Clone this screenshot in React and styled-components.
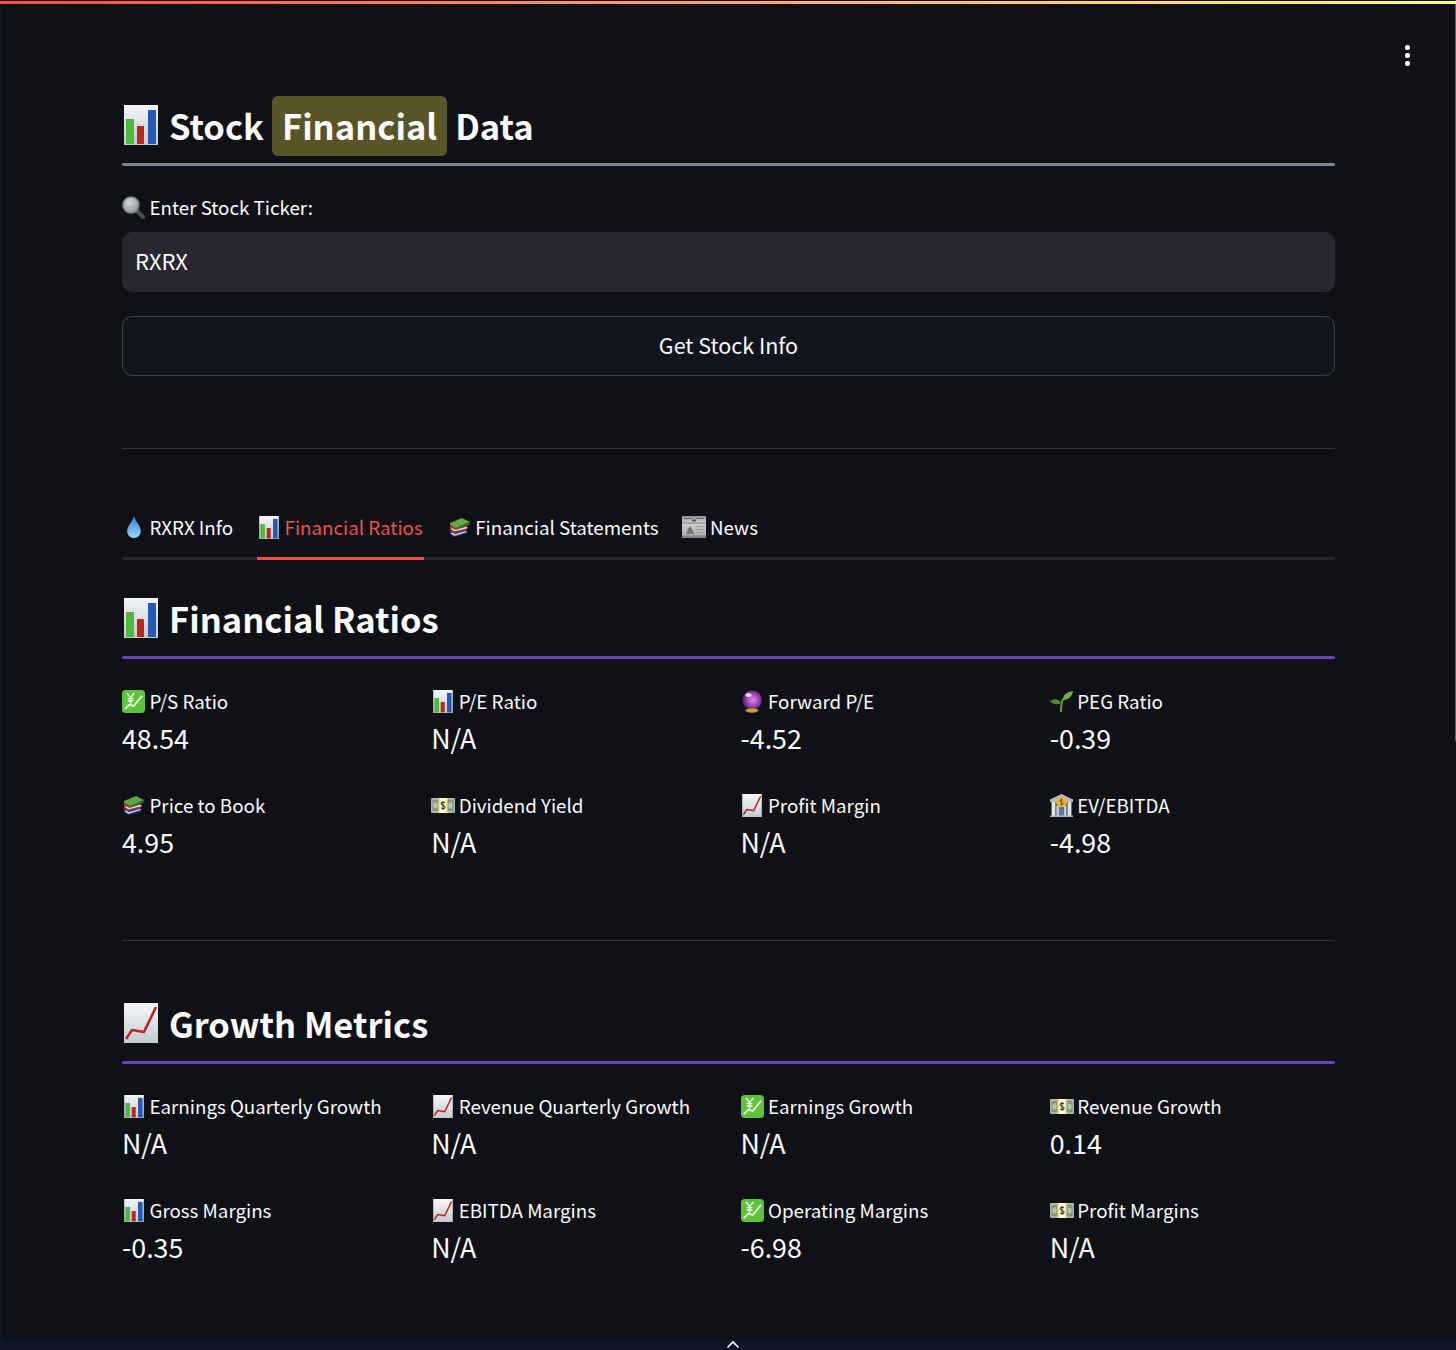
import styled, { createGlobalStyle } from "styled-components";

const Global = createGlobalStyle`
  html, body { margin: 0; padding: 0; background: #0e1629; }
  body { font-family: "Noto Sans CJK SC", "Noto Sans", sans-serif; color: #fafafa; }
`;

const Frame = styled.div`
  position: relative;
  width: 1456px;
  height: 1350px;
  overflow: hidden;
  display: flex;
  flex-direction: column;
  background: #0e1629;
`;

const TopBar = styled.div`
  height: 3px;
  margin-top: 1px;
  margin-bottom: -4px;
  position: relative;
  z-index: 1;
  background: linear-gradient(90deg, #ff4b4b, #fffd80);
`;

const Main = styled.main`
  flex: 1;
  margin-left: 1px;
  background: #0f1116;
  border-bottom-left-radius: 8px;
  padding: 96px 121px 0 121px;
`;

const Kebab = styled.div`
  position: absolute;
  top: 45px;
  left: 1405px;
  display: flex;
  flex-direction: column;
  gap: 3.5px;
  span { width: 4.5px; height: 4.5px; border-radius: 50%; background: #fafafa; }
`;

const Scrollbar = styled.div`
  position: absolute;
  top: 0;
  right: 0;
  width: 1px;
  height: 741px;
  background: #5b5d66;
`;

const BottomBar = styled.div`
  height: 10px;
  display: flex;
  justify-content: center;
  padding-left: 10px;
  svg { display: block; margin-top: 0; }
`;

const Title = styled.h1`
  margin: 0;
  height: 60px;
  box-sizing: border-box;
  padding-bottom: 2px;
  display: flex;
  align-items: center;
  font-size: 34.5px;
  font-weight: 600;
  line-height: 58px;
  letter-spacing: 0;
`;

const Highlight = styled.span`
  align-self: flex-start;
  margin: 0 8px 0 8px;
  padding: 0 10px;
  height: 60px;
  background: #5a5429;
  border-radius: 6px;
`;

const Heading = styled.h2`
  margin: ${(p) => p.$top}px 0 0;
  height: 60px;
  display: flex;
  align-items: center;
  font-size: 34.5px;
  font-weight: 600;
  line-height: 60px;
`;

const Rule = styled.div`
  height: 3px;
  border-radius: 2px;
  background: ${(p) => p.$color};
  margin-top: ${(p) => p.$top}px;
`;

const Divider = styled.hr`
  border: 0;
  height: 1px;
  background: #33353c;
  margin: ${(p) => p.$top}px 0 0;
`;

const IconText = styled.span`
  display: flex;
  align-items: center;
  height: 28px;
  font-size: 18.75px;
  line-height: 28px;
  gap: 4px;
`;

const FieldLabel = styled(IconText)`
  margin-top: 27px;
`;

const Input = styled.div`
  margin-top: 11px;
  height: 60px;
  box-sizing: border-box;
  padding: 0 13px 4px;
  display: flex;
  align-items: center;
  background: #262730;
  border-radius: 10px;
  font-size: 22px;
`;

const Button = styled.div`
  margin-top: 24px;
  height: 60px;
  box-sizing: border-box;
  padding-bottom: 4px;
  display: flex;
  align-items: center;
  justify-content: center;
  background: #11151e;
  border: 1px solid #3d4048;
  border-radius: 10px;
  font-size: 21.5px;
`;

const Tabs = styled.div`
  margin-top: 50px;
  height: 61px;
  box-sizing: border-box;
  display: flex;
  gap: 24px;
  border-bottom: 3px solid #26272e;
`;

const Tab = styled(IconText)`
  height: 61px;
  box-sizing: border-box;
  padding-bottom: 2px;
  padding-right: ${(p) => (p.$active ? 1 : 0)}px;
  margin-bottom: -3px;
  color: ${(p) => (p.$active ? "#f0524d" : "#fafafa")};
  border-bottom: 3px solid ${(p) => (p.$active ? "#ee4f4c" : "transparent")};
`;

const Grid = styled.div`
  margin-top: 30px;
  display: grid;
  grid-template-columns: repeat(4, 1fr);
  column-gap: 24px;
  row-gap: 36px;
`;

const Metric = styled.div`
  display: flex;
  flex-direction: column;
`;

const MetricLabel = styled(IconText)`
  box-sizing: border-box;
  padding-bottom: 4px;
`;

const MetricValue = styled.div`
  margin-top: 2px;
  height: 38px;
  font-size: 26.8px;
  line-height: 38px;
`;

const Glyph = styled.svg`
  display: block;
  flex: none;
`;

const Slot = styled.span`
  display: flex;
  flex: none;
  align-items: center;
  justify-content: center;
  width: ${(p) => p.$w}px;
  margin-right: ${(p) => p.$gap || 0}px;
`;

function ChartIcon({ w = 20, h = 23 }) {
  return (
    <Glyph width={w} height={h} viewBox="0 0 34 40">
      <defs>
        <linearGradient id="paper" x1="0" y1="0" x2="0" y2="1">
          <stop offset="0" stopColor="#f4f6f8" />
          <stop offset="1" stopColor="#c3c9d0" />
        </linearGradient>
      </defs>
      <rect x="0" y="0" width="34" height="40" fill="url(#paper)" />
      <rect x="2" y="14" width="8" height="25" fill="#4fb83f" />
      <rect x="13" y="21" width="7" height="18" fill="#b8281e" />
      <rect x="24" y="5" width="8" height="34" fill="#2459b8" />
    </Glyph>
  );
}

function TrendIcon({ w = 20, h = 23 }) {
  return (
    <Glyph width={w} height={h} viewBox="0 0 34 40">
      <defs>
        <linearGradient id="sheet" x1="0" y1="0" x2="0" y2="1">
          <stop offset="0" stopColor="#f6f7f9" />
          <stop offset="1" stopColor="#c5cad2" />
        </linearGradient>
      </defs>
      <rect width="34" height="40" fill="url(#sheet)" />
      <path d="M2 36 L8 27 L20 29 L32 4" fill="none" stroke="#b8281e" strokeWidth="2.6" strokeLinejoin="round" />
    </Glyph>
  );
}

function YenIcon() {
  return (
    <Glyph width={23} height={23} viewBox="0 0 24 24">
      <rect width="24" height="24" rx="4" fill="#5fc23c" />
      <path d="M5 3 L9 8 L13 3 M9 8 V14 M6 9 H12 M6 11.5 H12" fill="none" stroke="#f2fbea" strokeWidth="1.5" />
      <path d="M3 20 L8 15 L12 17 L21 6" fill="none" stroke="#f2fbea" strokeWidth="1.8" />
    </Glyph>
  );
}

function BallIcon() {
  return (
    <Glyph width={20} height={23} viewBox="0 0 20 23">
      <defs>
        <radialGradient id="ball" cx="0.55" cy="0.5" r="0.55">
          <stop offset="0" stopColor="#e889f0" />
          <stop offset="0.6" stopColor="#9a3fb0" />
          <stop offset="1" stopColor="#3b2050" />
        </radialGradient>
      </defs>
      <circle cx="10" cy="10" r="9.8" fill="url(#ball)" />
      <ellipse cx="6.5" cy="5" rx="3" ry="2" fill="#f6d9fa" />
      <ellipse cx="10" cy="20.5" rx="6.5" ry="2.2" fill="#c9973d" />
    </Glyph>
  );
}

function SproutIcon() {
  return (
    <Glyph width={23} height={23} viewBox="0 0 23 23">
      <path d="M11 22 C11 17 11 13 13 9" fill="none" stroke="#5c9a34" strokeWidth="2" />
      <path d="M13 10 C13 4 17 2 23 1 C22 7 18 10 13 10Z" fill="#6db33f" />
      <path d="M11 13 C9 9 5 8 0 11 C3 15 8 15 11 13Z" fill="#4d8c2c" />
    </Glyph>
  );
}

function BooksIcon() {
  return (
    <Glyph width={21} height={19} viewBox="0 0 21 19">
      <path d="M1 13 L17 11 L18 15 L5 19 L1 16Z" fill="#39478f" />
      <path d="M2.5 15 L5.5 17 L17.5 13.5" fill="none" stroke="#e4e4ea" strokeWidth="1.3" />
      <path d="M1 8 L15 6 L19 9 L18 11.5 L5 15 L1 12Z" fill="#a8322a" />
      <path d="M2.5 10.5 L5.5 12.5 L18 9.5" fill="none" stroke="#ece8e4" strokeWidth="1.3" />
      <path d="M1 5 L13 0 L21 4 L7 10 L1 7Z" fill="#5fa644" />
      <path d="M7 10 L21 4 V6.5 L7 12Z" fill="#2f6a2a" />
    </Glyph>
  );
}

function CashIcon() {
  return (
    <Glyph width={24} height={15} viewBox="0 0 24 15">
      <rect width="24" height="15" rx="1" fill="#aeb6a6" />
      <rect x="1.5" y="2" width="21" height="11" fill="#88957f" />
      <ellipse cx="4.5" cy="7.5" rx="2.2" ry="3" fill="#b9c4af" />
      <ellipse cx="19.5" cy="7.5" rx="2.2" ry="3" fill="#a8d0b8" />
      <rect x="7.5" y="0" width="9" height="15" fill="#f6e58a" />
      <rect x="9" y="0" width="6" height="15" fill="#fdf8e0" />
      <path d="M13.9 5 C13.1 3.8 10.1 3.8 10.1 5.6 C10.1 7.6 14.1 7.2 14.1 9.2 C14.1 11 10.9 11 10.1 9.8 M12 3 V12" fill="none" stroke="#4a4220" strokeWidth="1.1" />
    </Glyph>
  );
}

function BankIcon() {
  return (
    <Glyph width={23} height={23} viewBox="0 0 23 23">
      <path d="M11.5 0 L23 5.5 V8 H0 V5.5Z" fill="#b4bcc4" />
      <rect x="1" y="8" width="21" height="14" fill="#5f6b78" />
      <rect x="2" y="8" width="3.2" height="14" fill="#e2e6ea" />
      <rect x="6.5" y="12" width="2.4" height="10" fill="#c9ced4" />
      <rect x="14" y="12" width="2.4" height="10" fill="#c9ced4" />
      <rect x="17.8" y="8" width="3.2" height="14" fill="#e2e6ea" />
      <rect x="9.6" y="15" width="3.8" height="7" fill="#4f7fa8" />
      <rect x="0" y="21.5" width="23" height="1.5" fill="#aab1b8" />
      <circle cx="11.5" cy="8" r="5.4" fill="#e8b932" />
      <path d="M13.3 6.4 C12.7 5.4 9.9 5.4 9.9 7.1 C9.9 8.7 13.3 8.1 13.3 9.7 C13.3 10.9 10.5 10.9 9.8 9.9 M11.5 4.4 V11.6" fill="none" stroke="#6e500c" strokeWidth="0.9" />
    </Glyph>
  );
}

function DropIcon() {
  return (
    <Glyph width={14} height={22} viewBox="0 0 14 22">
      <defs>
        <linearGradient id="drop" x1="0" y1="0" x2="0" y2="1">
          <stop offset="0" stopColor="#2a7fd8" />
          <stop offset="1" stopColor="#9ad6f6" />
        </linearGradient>
      </defs>
      <path d="M7 0 C8.4 6 13.8 9.5 13.8 15 C13.8 19 10.8 22 7 22 C3.2 22 0.2 19 0.2 15 C0.2 9.5 5.6 6 7 0Z" fill="url(#drop)" />
    </Glyph>
  );
}

function PaperIcon() {
  return (
    <Glyph width={24} height={22} viewBox="0 0 24 22">
      <defs>
        <linearGradient id="news" x1="0" y1="0" x2="0" y2="1">
          <stop offset="0" stopColor="#8f8f8f" />
          <stop offset="0.3" stopColor="#cfcfcf" />
          <stop offset="1" stopColor="#a8a8a8" />
        </linearGradient>
      </defs>
      <rect width="24" height="22" fill="url(#news)" />
      <rect x="2" y="2" width="8" height="1" fill="#6a6a6a" />
      <rect x="14" y="2" width="8" height="1" fill="#6a6a6a" />
      <rect x="10" y="3.5" width="4" height="2" fill="#5c5c5c" />
      <rect x="0" y="6.5" width="24" height="1" fill="#7e7e7e" />
      <path d="M4 18 L6.5 12 L8 10.5 L9.5 12 L12 18Z" fill="#767676" />
      <rect x="14" y="10" width="8" height="1" fill="#9a9a9a" />
      <rect x="14" y="13" width="8" height="1" fill="#9a9a9a" />
      <rect x="14" y="16" width="8" height="1" fill="#9a9a9a" />
      <rect x="0" y="19.5" width="24" height="2.5" fill="#858585" />
    </Glyph>
  );
}

function LensIcon() {
  return (
    <Glyph width={23} height={23} viewBox="0 0 23 23">
      <defs>
        <radialGradient id="lens" cx="0.4" cy="0.35" r="0.7">
          <stop offset="0" stopColor="#d6d8da" />
          <stop offset="1" stopColor="#8e949a" />
        </radialGradient>
      </defs>
      <path d="M14 14 L21 21" stroke="#4b4f55" strokeWidth="4" strokeLinecap="round" />
      <circle cx="9" cy="9" r="8" fill="url(#lens)" stroke="#80858b" strokeWidth="1.4" />
    </Glyph>
  );
}

function Caret() {
  return (
    <Glyph width={14} height={10} viewBox="0 0 14 10">
      <path d="M1.5 7.5 L7 2 L12.5 7.5" fill="none" stroke="#fafafa" strokeWidth="1.6" />
    </Glyph>
  );
}

const icons = {
  chart: <ChartIcon />,
  trend: <TrendIcon />,
  yen: <YenIcon />,
  ball: <BallIcon />,
  sprout: <SproutIcon />,
  books: <BooksIcon />,
  cash: <CashIcon />,
  bank: <BankIcon />,
};

const ratios = [
  ["yen", "P/S Ratio", "48.54"],
  ["chart", "P/E Ratio", "N/A"],
  ["ball", "Forward P/E", "-4.52"],
  ["sprout", "PEG Ratio", "-0.39"],
  ["books", "Price to Book", "4.95"],
  ["cash", "Dividend Yield", "N/A"],
  ["trend", "Profit Margin", "N/A"],
  ["bank", "EV/EBITDA", "-4.98"],
];

const growth = [
  ["chart", "Earnings Quarterly Growth", "N/A"],
  ["trend", "Revenue Quarterly Growth", "N/A"],
  ["yen", "Earnings Growth", "N/A"],
  ["cash", "Revenue Growth", "0.14"],
  ["chart", "Gross Margins", "-0.35"],
  ["trend", "EBITDA Margins", "N/A"],
  ["yen", "Operating Margins", "-6.98"],
  ["cash", "Profit Margins", "N/A"],
];

function MetricGrid({ items }) {
  return (
    <Grid>
      {items.map(([icon, label, value]) => (
        <Metric key={label}>
          <MetricLabel>
            <Slot $w={23.5}>{icons[icon]}</Slot>
            {label}
          </MetricLabel>
          <MetricValue>{value}</MetricValue>
        </Metric>
      ))}
    </Grid>
  );
}

export default function App() {
  return (
    <Frame>
      <Global />
      <TopBar />
      <Kebab>
        <span />
        <span />
        <span />
      </Kebab>
      <Scrollbar />
      <Main>
        <Title>
          <Slot $w={38} $gap={9}>
            <ChartIcon w={34} h={40} />
          </Slot>
          Stock
          <Highlight>Financial</Highlight>
          Data
        </Title>
        <Rule $color="#808495" $top={7} />
        <FieldLabel>
          <Slot $w={23.5}>
            <LensIcon />
          </Slot>
          Enter Stock Ticker:
        </FieldLabel>
        <Input>RXRX</Input>
        <Button>Get Stock Info</Button>
        <Divider $top={72} />
        <Tabs>
          <Tab>
            <Slot $w={23.5}>
              <DropIcon />
            </Slot>
            RXRX Info
          </Tab>
          <Tab $active>
            <Slot $w={23.5}>
              <ChartIcon />
            </Slot>
            Financial Ratios
          </Tab>
          <Tab>
            <Slot $w={23.5}>
              <BooksIcon />
            </Slot>
            Financial Statements
          </Tab>
          <Tab>
            <Slot $w={23.5}>
              <PaperIcon />
            </Slot>
            News
          </Tab>
        </Tabs>
        <Heading $top={28}>
          <Slot $w={38} $gap={9}>
            <ChartIcon w={34} h={40} />
          </Slot>
          Financial Ratios
        </Heading>
        <Rule $color="#6741b8" $top={8} />
        <MetricGrid items={ratios} />
        <Divider $top={79} />
        <Heading $top={52}>
          <Slot $w={38} $gap={9}>
            <TrendIcon w={34} h={40} />
          </Slot>
          Growth Metrics
        </Heading>
        <Rule $color="#6741b8" $top={8} />
        <MetricGrid items={growth} />
      </Main>
      <BottomBar>
        <Caret />
      </BottomBar>
    </Frame>
  );
}
